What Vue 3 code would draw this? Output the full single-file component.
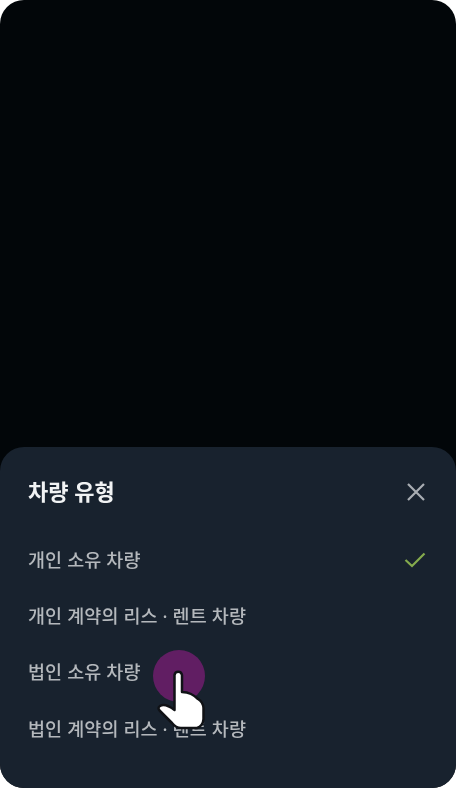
<script setup>
const options = [
  { label: '개인 소유 차량', selected: true },
  { label: '개인 계약의 리스 · 렌트 차량', selected: false },
  { label: '법인 소유 차량', selected: false },
  { label: '법인 계약의 리스 · 렌트 차량', selected: false },
]
</script>

<template>
  <div class="phone">
    <section class="sheet">
      <header class="head">
        <h2 class="title">차량 유형</h2>
        <svg class="close" viewBox="0 0 20 20" width="20" height="20" aria-label="닫기">
          <path d="M2 2 18 18M18 2 2 18" />
        </svg>
      </header>
      <ul class="list">
        <li v-for="o in options" :key="o.label" class="row">
          <span class="label">{{ o.label }}</span>
          <svg v-if="o.selected" class="check" viewBox="0 0 22 16" width="22" height="16">
            <path d="M1.5 8 8 14 20.5 1.5" />
          </svg>
        </li>
      </ul>
    </section>
    <div class="touch"></div>
    <svg class="hand" viewBox="0 0 60 70" width="60" height="70">
      <path d="M24.5 10a3.8 3.8 0 0 1 7.5 0V27Q37 27 41 29T48 34Q53 37 53.5 43V54Q53 61 47 63H31Q26 63 22 58L10 46Q7 43 10 41Q15 38 24.5 45Z" />
    </svg>
  </div>
</template>

<style>
html, body { margin: 0; background: #fff; }
</style>

<style scoped>
.phone {
  position: relative;
  width: 456px;
  height: 788px;
  border-radius: 24px;
  background: #020609;
  overflow: hidden;
  display: flex;
  flex-direction: column;
  justify-content: flex-end;
  font-family: "Noto Sans", "Noto Sans CJK KR", sans-serif;
}
.sheet {
  height: 341px;
  box-sizing: border-box;
  padding: 0 28px;
  background: #18222e;
  border-radius: 24px 24px 0 0;
}
.head {
  height: 88px;
  display: flex;
  align-items: center;
  justify-content: space-between;
}
.title {
  margin: 0;
  font-size: 22px;
  font-weight: 700;
  line-height: 30px;
  color: #f1f3f4;
  filter: blur(0.6px);
}
.close {
  margin: 2px 2px 0 0;
  fill: none;
  stroke: #a9aeb3;
  stroke-width: 2.2;
  filter: blur(0.5px);
}
.list {
  list-style: none;
  margin: -3.5px 0 0;
  padding: 0;
}
.row {
  height: 56.4px;
  display: flex;
  align-items: center;
  justify-content: space-between;
}
.label {
  font-size: 18.5px;
  font-weight: 500;
  line-height: 26px;
  letter-spacing: 0.1px;
  color: #b4b8bc;
  filter: blur(0.6px);
}
.check {
  margin-right: 2px;
  fill: none;
  stroke: #84ab4d;
  stroke-width: 2.2;
  filter: blur(0.5px);
}
.touch {
  position: absolute;
  left: 153px;
  top: 650px;
  width: 52px;
  height: 52px;
  border-radius: 50%;
  background: #611e63;
  filter: blur(0.4px);
}
.hand {
  position: absolute;
  left: 150px;
  top: 665px;
  fill: #fff;
  stroke: #101216;
  stroke-width: 2.5;
  stroke-linejoin: round;
  filter: blur(0.6px);
}
</style>
